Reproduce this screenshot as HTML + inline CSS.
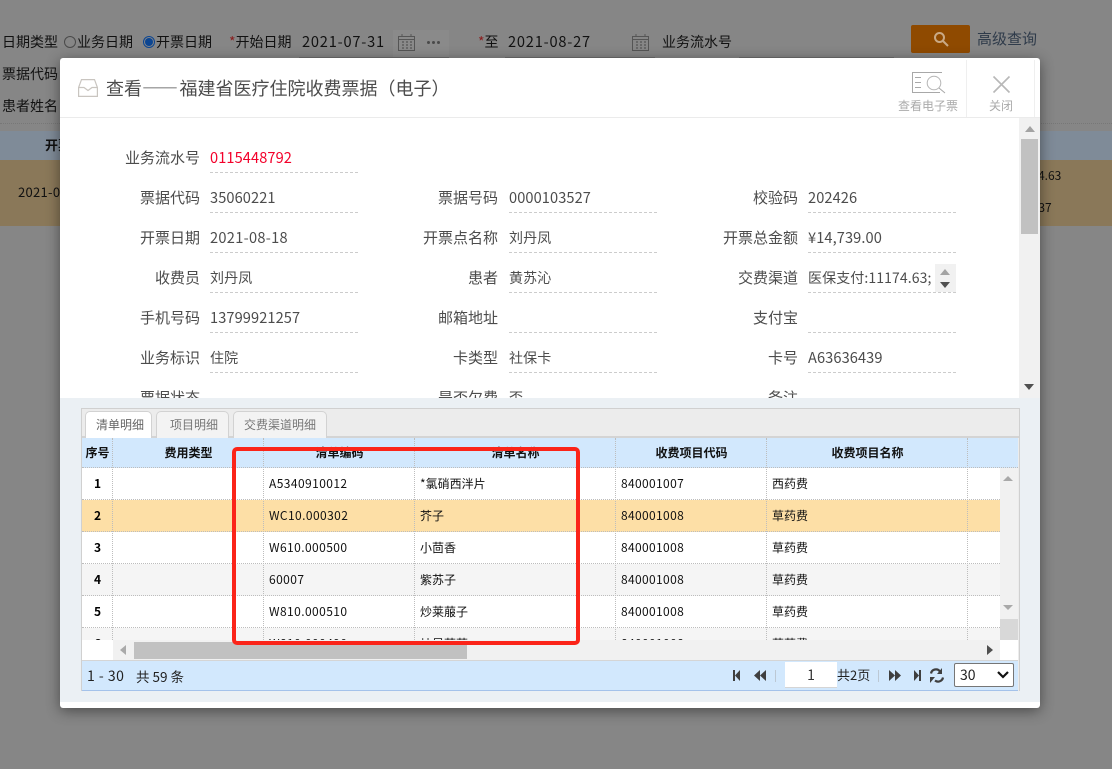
<!DOCTYPE html>
<html lang="zh-CN"><head><meta charset="utf-8"><title>查看</title>
<style>
*{box-sizing:border-box}
html,body{margin:0;padding:0}
body{width:1112px;height:769px;position:relative;overflow:hidden;background:#868686;font-family:"Noto Sans CJK SC","Liberation Sans",sans-serif;color:#111}
.a,.a *{position:absolute}
span,i,b,div{position:absolute;white-space:nowrap}
i{display:block}
.t{font-size:14px;line-height:20px;height:20px;color:#111}
.ul{height:1px;background:#6e6e6e}
.modal{left:60px;top:58px;width:980px;height:650px;background:#fff;border-radius:3px;box-shadow:0 3px 14px rgba(0,0,0,.45)}
.l{width:110px;text-align:right;font-size:15px;line-height:20px;color:#4c4c4c}
.v{font-size:14.6px;line-height:20px;color:#4c4c4c;letter-spacing:.1px}
.d{height:0;width:148px;border-top:1px dashed #ccc}
.tab{top:411px;height:27px;border:1px solid #d2d2d2;border-bottom:0;border-radius:5px 5px 0 0;background:#f3f3f3;font-size:12px;line-height:26px;text-align:center;color:#777}
.th{top:438px;height:30px;font-size:12px;line-height:30px;font-weight:700;color:#111;text-align:center}
.r{left:82px;width:918px;height:32px;border-bottom:1px dotted #bdbdbd;background:#fff}
.r span{font-size:12px;line-height:31px;top:0;color:#111}
.n{left:0;width:31px;text-align:center;font-weight:700;color:#000!important}
.c1{left:187px;letter-spacing:.42px}.c2{left:338px}.c3{left:539px;letter-spacing:.35px}.c4{left:690px}
.vl{top:438px;height:202px;width:0;border-left:1px dotted #bdbdbd}
.s{position:static}
</style></head><body>

<!-- background page -->
<span class="t" style="left:2px;top:32px">日期类型</span>
<i style="left:64px;top:36px;width:12px;height:12px;border:1px solid #4a4a4a;border-radius:50%"></i>
<span class="t" style="left:77px;top:32px">业务日期</span>
<i style="left:143px;top:36px;width:12px;height:12px;border:1px solid #0b4592;border-radius:50%"></i>
<i style="left:145px;top:38px;width:8px;height:8px;background:#0b4592;border-radius:50%"></i>
<span class="t" style="left:156px;top:32px">开票日期</span>
<span class="t" style="left:229px;top:32px"><span class="s" style="color:#8a1f1f">*</span>开始日期</span>
<i style="left:393px;top:30px;width:56px;height:27px;background:#8a8a8a"></i>
<span class="t" style="left:302px;top:32px;font-size:14.6px;letter-spacing:.8px">2021-07-31</span>
<i class="ul" style="left:299px;top:57px;width:150px"></i>
<svg style="position:absolute;left:398px;top:33px" width="18" height="19" viewBox="0 0 18 19" fill="none" stroke="#555"><rect x=".5" y="3.500" width="16" height="14"/><path d="M4 1v3M13 1v3M1 6.500h15"/><path d="M4 9h2M8 9h2M12 9h2M4 12h2M8 12h2M12 12h2M4 15h2M8 15h2M12 15h2" stroke-width="1.300"/></svg>
<i style="left:427px;top:41px;width:3px;height:3px;background:#4a4a4a;border-radius:50%"></i><i style="left:432px;top:41px;width:3px;height:3px;background:#4a4a4a;border-radius:50%"></i><i style="left:437px;top:41px;width:3px;height:3px;background:#4a4a4a;border-radius:50%"></i>
<span class="t" style="left:478px;top:32px"><span class="s" style="color:#8a1f1f">*</span>至</span>
<span class="t" style="left:508px;top:32px;font-size:14.6px;letter-spacing:.8px">2021-08-27</span>
<i class="ul" style="left:505px;top:57px;width:150px"></i>
<svg style="position:absolute;left:632px;top:33px" width="18" height="19" viewBox="0 0 18 19" fill="none" stroke="#555"><rect x=".5" y="3.500" width="16" height="14"/><path d="M4 1v3M13 1v3M1 6.500h15"/><path d="M4 9h2M8 9h2M12 9h2M4 12h2M8 12h2M12 12h2M4 15h2M8 15h2M12 15h2" stroke-width="1.300"/></svg>
<span class="t" style="left:662px;top:32px">业务流水号</span>
<i class="ul" style="left:739px;top:57px;width:155px"></i>
<i style="left:911px;top:25px;width:59px;height:28px;background:#8f4a00;border-radius:2px"></i>
<svg style="position:absolute;left:933px;top:31px" width="16" height="16" viewBox="0 0 16 16" fill="none" stroke="#c9a985" stroke-width="2"><circle cx="6.500" cy="6.500" r="4.500"/><path d="M10 10l5 5"/></svg>
<span class="t" style="left:977px;top:29px;font-size:15px;color:#2f3b4a">高级查询</span>
<span class="t" style="left:2px;top:64px">票据代码</span>
<span class="t" style="left:2px;top:96px">患者姓名</span>
<i style="left:0;top:123px;width:1112px;height:0;border-top:1px dotted #777"></i>
<i style="left:0;top:131px;width:1112px;height:29px;background:#7f8b98"></i>
<i style="left:0;top:160px;width:1112px;height:66px;background:#8a7859"></i>
<span class="t" style="left:45px;top:135px;font-weight:700;font-size:13px">开票</span>
<span class="t" style="left:18px;top:182px;font-size:13px;letter-spacing:.3px">2021-08</span>
<span class="t" style="left:1018px;top:166px;font-size:12px">1174.63</span>
<span class="t" style="left:1025px;top:198px;font-size:12px">1837</span>

<!-- modal -->
<div class="modal"></div>
<svg style="position:absolute;left:78px;top:79px" width="20" height="18" viewBox="0 0 20 18" fill="none" stroke="#c9c5c0" stroke-width="1.200"><path d="M.6 8.500 3.500.6h13l2.900 7.900v8.900H.6z"/><path d="M.6 8.500H6l4 3 4-3h5.400"/></svg>
<span style="left:106px;top:75px;font-size:18px;line-height:26px;color:#4c4c4c">查看<span class="s" style="letter-spacing:1.500px">——</span>福建省医疗住院收费票据（电子）</span>
<svg style="position:absolute;left:911px;top:71px" width="36" height="23" viewBox="0 0 36 23" fill="none" stroke="#a8a8a8"><path d="M31 1.500H1.500v20H29"/><path d="M4 6.500h6M4 11.500h6M4 16.500h6"/><circle cx="23" cy="12" r="6.800" stroke="#b5b5b5"/><path d="M28 17l6 5"/></svg>
<span style="left:898px;top:97px;font-size:12px;line-height:17px;color:#aaa">查看电子票</span>
<i style="left:966px;top:60px;width:1px;height:57px;background:#efefef"></i>
<i style="left:1034px;top:60px;width:1px;height:57px;background:#efefef"></i>
<svg style="position:absolute;left:992px;top:75px" width="19" height="19" viewBox="0 0 19 19" fill="none" stroke="#b8b8b8" stroke-width="1.600"><path d="M1.500 1.500l16 16M17.500 1.500l-16 16"/></svg>
<span style="left:989px;top:97px;font-size:12px;line-height:17px;color:#aaa">关闭</span>
<i style="left:60px;top:117px;width:980px;height:1px;background:#ebebeb"></i>

<!-- form -->
<span class="l" style="left:90px;top:148px">业务流水号</span><span class="v" style="left:210px;top:148px;color:#f3002a">0115448792</span><i class="d" style="left:210px;top:172px"></i>

<span class="l" style="left:90px;top:188px">票据代码</span><span class="v" style="left:210px;top:188px">35060221</span><i class="d" style="left:210px;top:212px"></i>
<span class="l" style="left:388px;top:188px">票据号码</span><span class="v" style="left:509px;top:188px">0000103527</span><i class="d" style="left:509px;top:212px"></i>
<span class="l" style="left:688px;top:188px">校验码</span><span class="v" style="left:808px;top:188px">202426</span><i class="d" style="left:808px;top:212px"></i>

<span class="l" style="left:90px;top:228px">开票日期</span><span class="v" style="left:210px;top:228px;letter-spacing:.3px">2021-08-18</span><i class="d" style="left:210px;top:252px"></i>
<span class="l" style="left:388px;top:228px">开票点名称</span><span class="v" style="left:509px;top:228px;font-size:14px">刘丹凤</span><i class="d" style="left:509px;top:252px"></i>
<span class="l" style="left:688px;top:228px">开票总金额</span><span class="v" style="left:808px;top:228px">¥14,739.00</span><i class="d" style="left:808px;top:252px"></i>

<span class="l" style="left:90px;top:268px">收费员</span><span class="v" style="left:210px;top:268px;font-size:14px">刘丹凤</span><i class="d" style="left:210px;top:292px"></i>
<span class="l" style="left:388px;top:268px">患者</span><span class="v" style="left:509px;top:268px;font-size:14px">黄苏沁</span><i class="d" style="left:509px;top:292px"></i>
<span class="l" style="left:688px;top:268px">交费渠道</span><span class="v" style="left:808px;top:268px;font-size:14px">医保支付:11174.63;</span><i class="d" style="left:808px;top:292px"></i>
<i style="left:935px;top:264px;width:21px;height:28px;background:#f1f1f1"></i>
<i style="left:940px;top:269px;width:0;height:0;border:5px solid transparent;border-top:0;border-bottom:6px solid #a3a3a3"></i>
<i style="left:940px;top:282px;width:0;height:0;border:5px solid transparent;border-bottom:0;border-top:6px solid #505050"></i>

<span class="l" style="left:90px;top:308px">手机号码</span><span class="v" style="left:210px;top:308px">13799921257</span><i class="d" style="left:210px;top:332px"></i>
<span class="l" style="left:388px;top:308px">邮箱地址</span><i class="d" style="left:509px;top:332px"></i>
<span class="l" style="left:688px;top:308px">支付宝</span><i class="d" style="left:808px;top:332px"></i>

<span class="l" style="left:90px;top:348px">业务标识</span><span class="v" style="left:210px;top:348px;font-size:14px">住院</span><i class="d" style="left:210px;top:372px"></i>
<span class="l" style="left:388px;top:348px">卡类型</span><span class="v" style="left:509px;top:348px;font-size:14px">社保卡</span><i class="d" style="left:509px;top:372px"></i>
<span class="l" style="left:688px;top:348px">卡号</span><span class="v" style="left:808px;top:348px">A63636439</span><i class="d" style="left:808px;top:372px"></i>

<span class="l" style="left:90px;top:388px">票据状态</span>
<span class="l" style="left:388px;top:388px">是否欠费</span><span class="v" style="left:509px;top:388px;font-size:14px">否</span>
<span class="l" style="left:688px;top:388px">备注</span>

<!-- form scrollbar -->
<i style="left:1019px;top:118px;width:21px;height:280px;background:#f1f1f1"></i>
<i style="left:1021px;top:139px;width:17px;height:95px;background:#c1c1c1"></i>
<i style="left:1025px;top:126px;width:0;height:0;border:5px solid transparent;border-top:0;border-bottom:6px solid #a3a3a3"></i>
<i style="left:1024px;top:384px;width:0;height:0;border:5px solid transparent;border-bottom:0;border-top:6px solid #505050"></i>

<!-- lower panel -->
<i style="left:60px;top:398px;width:980px;height:304px;background:#ebf0f4"></i>
<i style="left:81px;top:408px;width:939px;height:283px;background:#ececec;border:1px solid #d0d0d0;border-bottom:0"></i>
<i style="left:82px;top:436px;width:937px;height:2px;background:#d4d4d4"></i>
<span class="tab" style="left:85px;width:67px;background:#fff;color:#666;height:28px;text-indent:3px">清单明细</span>
<span class="tab" style="left:156px;width:73px;text-indent:3px">项目明细</span>
<span class="tab" style="left:233px;width:94px">交费渠道明细</span>

<!-- table -->
<i style="left:82px;top:438px;width:936px;height:30px;background:#d2e8fd"></i>
<i style="left:82px;top:467px;width:936px;height:0;border-top:1px dotted #bdbdbd"></i>
<span class="th" style="left:82px;width:31px">序号</span>
<span class="th" style="left:113px;width:151px">费用类型</span>
<span class="th" style="left:264px;width:151px">清单编码</span>
<span class="th" style="left:415px;width:201px">清单名称</span>
<span class="th" style="left:616px;width:151px">收费项目代码</span>
<span class="th" style="left:767px;width:201px">收费项目名称</span>

<div class="r" style="top:468px"><span class="n">1</span><span class="c1">A5340910012</span><span class="c2">*氯硝西泮片</span><span class="c3">840001007</span><span class="c4">西药费</span></div>
<div class="r" style="top:500px;background:#fddfa6"><span class="n">2</span><span class="c1">WC10.000302</span><span class="c2">芥子</span><span class="c3">840001008</span><span class="c4">草药费</span></div>
<div class="r" style="top:532px"><span class="n">3</span><span class="c1">W610.000500</span><span class="c2">小茴香</span><span class="c3">840001008</span><span class="c4">草药费</span></div>
<div class="r" style="top:564px;background:#f5f5f5"><span class="n">4</span><span class="c1">60007</span><span class="c2">紫苏子</span><span class="c3">840001008</span><span class="c4">草药费</span></div>
<div class="r" style="top:596px"><span class="n">5</span><span class="c1">W810.000510</span><span class="c2">炒莱菔子</span><span class="c3">840001008</span><span class="c4">草药费</span></div>
<div class="r" style="top:628px;background:#f5f5f5"><span class="n">6</span><span class="c1">W810.000490</span><span class="c2">炒旱莲草</span><span class="c3">840001008</span><span class="c4">草药费</span></div>

<i class="vl" style="left:112px"></i><i class="vl" style="left:263px"></i><i class="vl" style="left:414px"></i><i class="vl" style="left:615px"></i><i class="vl" style="left:766px"></i><i class="vl" style="left:967px"></i>

<!-- table scrollbars -->
<i style="left:1000px;top:468px;width:18px;height:172px;background:#f1f1f1"></i>
<i style="left:1000px;top:619px;width:18px;height:21px;background:#d8d8d8"></i>
<i style="left:1003px;top:476px;width:0;height:0;border:5px solid transparent;border-top:0;border-bottom:5px solid #a9a9a9"></i>
<i style="left:1003px;top:605px;width:0;height:0;border:5px solid transparent;border-bottom:0;border-top:5px solid #a9a9a9"></i>
<i style="left:82px;top:640px;width:31px;height:20px;background:#fff"></i>
<i style="left:113px;top:640px;width:887px;height:20px;background:#f1f1f1"></i>
<i style="left:1000px;top:640px;width:18px;height:20px;background:#fff"></i>
<i style="left:134px;top:642px;width:333px;height:17px;background:#c1c1c1"></i>
<i style="left:120px;top:645px;width:0;height:0;border:5px solid transparent;border-left:0;border-right:6px solid #a9a9a9"></i>
<i style="left:987px;top:645px;width:0;height:0;border:5px solid transparent;border-right:0;border-left:6px solid #505050"></i>

<!-- footer -->
<i style="left:82px;top:660px;width:936px;height:31px;background:#d2e8fd;border-top:1px solid #d5d5d5;border-bottom:1px solid #a4c2ea"></i>
<span style="left:87px;top:666px;font-size:14px;line-height:20px;color:#222;letter-spacing:.5px">1 - 30</span>
<span style="left:136px;top:666px;font-size:13.500px;line-height:20px;color:#222">共 59 条</span>
<svg style="position:absolute;left:730px;top:666px" width="220" height="20" viewBox="0 0 220 20" fill="#3f3f3f"><path d="M3 4h2v11H3zM10 4v11L5 9.500z"/><path d="M30 4v11l-6-5.500zM36 4v11l-6-5.500z"/><path d="M159 4v11l6-5.500zM165 4v11l6-5.500z"/><path d="M184 4v11l5-5.500zM189 4h2v11h-2z"/><g transform="translate(5 0)"><g fill="none" stroke="#3f3f3f" stroke-width="2.200"><path d="M205 5.500a5 5 0 0 0-9 2M200 14.500a5 5 0 0 0 8-3"/></g><path d="M207 2v6h-5zM195 17v-6h5z"/></g></svg>
<i style="left:775px;top:670px;width:1px;height:12px;background:#bcc8d4"></i>
<i style="left:785px;top:662px;width:52px;height:26px;background:#fff;border-bottom:1px solid #d5d5d5"></i>
<span style="left:785px;top:665px;width:52px;text-align:center;font-size:14px;line-height:20px;color:#333">1</span>
<span style="left:837px;top:665px;font-size:13px;line-height:20px;color:#222">共2页</span>
<i style="left:878px;top:670px;width:1px;height:12px;background:#bcc8d4"></i>
<i style="left:954px;top:663px;width:60px;height:24px;background:#fff;border:1px solid #767676;border-radius:2px"></i>
<span style="left:960px;top:665px;font-size:14px;line-height:20px;color:#222">30</span>
<svg style="position:absolute;left:996px;top:670px" width="14" height="10" viewBox="0 0 14 10" fill="none" stroke="#111" stroke-width="2.200"><path d="M2 2l5 5 5-5"/></svg>

<!-- annotation -->
<i style="left:232px;top:447px;width:348px;height:198px;border:4px solid #fb2419;border-radius:5px"></i>
</body></html>
